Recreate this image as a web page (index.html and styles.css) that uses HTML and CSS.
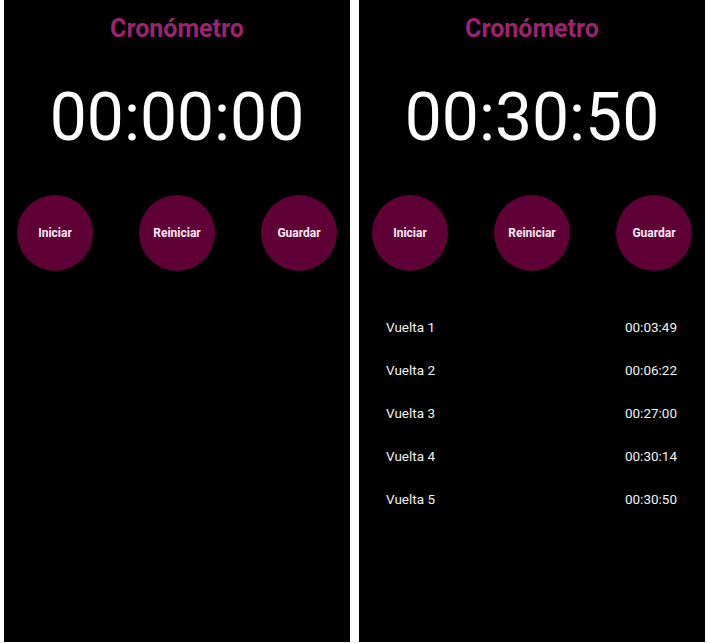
FILE: index.html
```html
<!DOCTYPE html>
<html lang="es">
<head>
<meta charset="utf-8">
<title>Cronómetro</title>
<link rel="stylesheet" href="styles.css">
</head>
<body>
  <section class="screen">
    <h1 class="title">Cronómetro</h1>
    <div class="clock">00:00:00</div>
    <div class="controls">
      <button class="round-btn">Iniciar</button>
      <button class="round-btn">Reiniciar</button>
      <button class="round-btn">Guardar</button>
    </div>
  </section>
  <section class="screen">
    <h1 class="title">Cronómetro</h1>
    <div class="clock">00:30:50</div>
    <div class="controls">
      <button class="round-btn">Iniciar</button>
      <button class="round-btn">Reiniciar</button>
      <button class="round-btn">Guardar</button>
    </div>
    <ul class="laps">
      <li class="lap"><span>Vuelta 1</span><span>00:03:49</span></li>
      <li class="lap"><span>Vuelta 2</span><span>00:06:22</span></li>
      <li class="lap"><span>Vuelta 3</span><span>00:27:00</span></li>
      <li class="lap"><span>Vuelta 4</span><span>00:30:14</span></li>
      <li class="lap"><span>Vuelta 5</span><span>00:30:50</span></li>
    </ul>
  </section>
</body>
</html>
```
FILE: styles.css
```css
html, body {
  margin: 0;
  background: #ffffff;
}
body {
  display: flex;
  gap: 9px;
  padding: 0 6px 0 4px;
  font-family: Roboto, "Liberation Sans", sans-serif;
  height: 643px;
  box-sizing: border-box;
  overflow: hidden;
}
.screen {
  width: 346px;
  height: 642px;
  background: #000000;
  display: flex;
  flex-direction: column;
  align-items: stretch;
  padding-top: 15px;
  box-sizing: border-box;
}
.title {
  margin: 0;
  text-align: center;
  font-size: 25px;
  line-height: 28px;
  font-weight: 700;
  color: #9b2370;
}
.clock {
  margin-top: 37px;
  text-align: center;
  font-size: 66px;
  line-height: 75px;
  font-weight: 400;
  color: #ffffff;
}
.controls {
  margin-top: 40px;
  display: flex;
  justify-content: space-between;
  padding: 0 13px;
}
.round-btn {
  width: 76px;
  height: 76px;
  border-radius: 50%;
  border: none;
  background: #5f0037;
  color: #fbe8f2;
  font-family: Roboto, "Liberation Sans", sans-serif;
  font-weight: 700;
  font-size: 12px;
  padding: 0;
}
.laps {
  list-style: none;
  margin: 35px 0 0;
  padding: 0 28px 0 27px;
}
.lap {
  display: flex;
  justify-content: space-between;
  font-size: 13.5px;
  line-height: 43px;
  color: #f2f2f2;
}
```
